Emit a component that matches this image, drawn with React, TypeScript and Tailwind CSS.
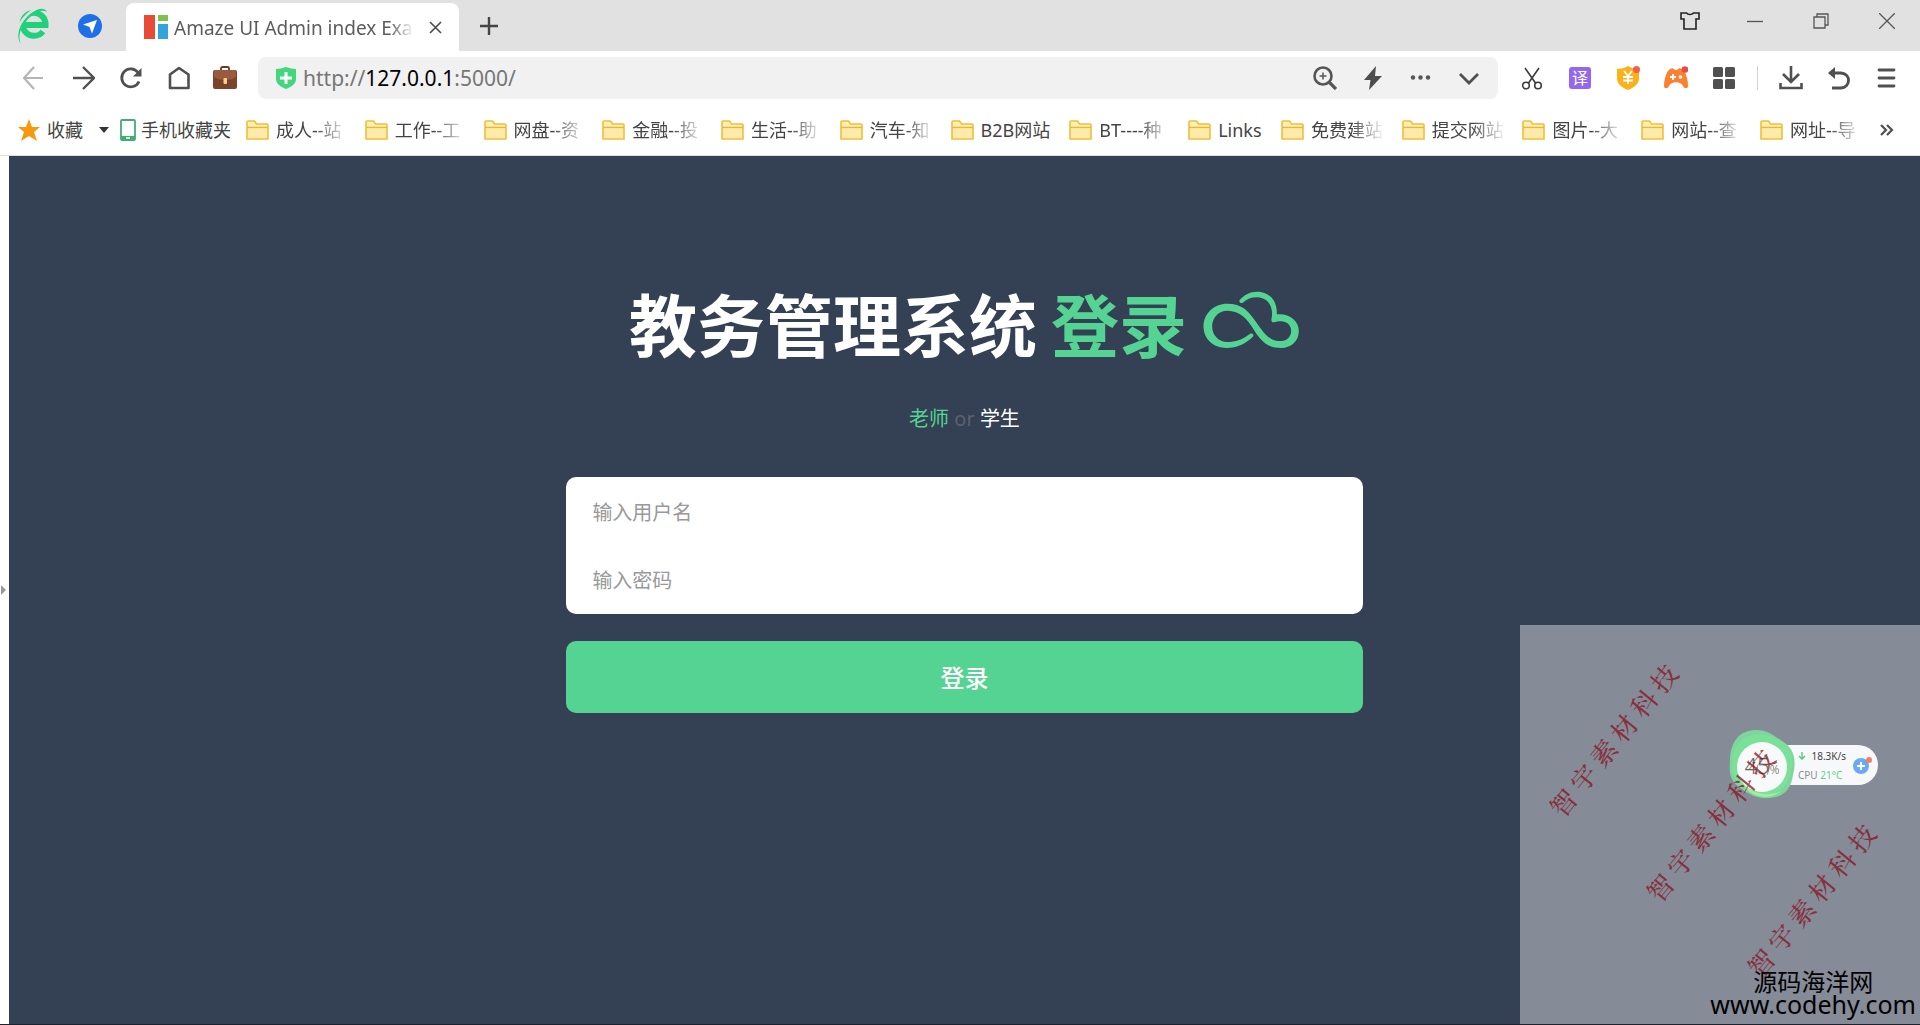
import { useState } from 'react';
import type { FormEvent } from 'react';

interface Bookmark {
    title: string;
    width: string;
}

const BOOKMARKS: Bookmark[] = [
    { title: '成人--站', width: 'w-[72px]' },
    { title: '工作--工', width: 'w-[72px]' },
    { title: '网盘--资', width: 'w-[72px]' },
    { title: '金融--投', width: 'w-[72px]' },
    { title: '生活--助', width: 'w-[72px]' },
    { title: '汽车-知', width: 'w-[64px]' },
    { title: 'B2B网站', width: 'w-[72px]' },
    { title: 'BT----种', width: 'w-[72px]' },
    { title: 'Links', width: 'w-[46px]' },
    { title: '免费建站', width: 'w-[74px]' },
    { title: '提交网站', width: 'w-[74px]' },
    { title: '图片--大', width: 'w-[72px]' },
    { title: '网站--查', width: 'w-[72px]' },
    { title: '网址--导', width: 'w-[72px]' },
];

const NO_FADE = ['B2B网站', 'Links'];

const WATERMARKS = [
    'left-[93px] top-[115px]',
    'left-[190px] top-[200px]',
    'left-[291px] top-[275px]',
];

function BrowserLogo() {
    return (
        <svg viewBox="0 0 34 38" className="h-[38px] w-[34px]" aria-hidden="true">
            <path d="M27 24.500A11.500 11.500 0 1 1 29.500 18H9" fill="none" stroke="#1fd17b" strokeWidth="6" />
            <path d="M3 37C-1 30 2 18 11 9 19 1 27-1 31 3" fill="none" stroke="#e1e1e1" strokeWidth="4" />
            <path d="M5 37C0 31 2 19 11 10 19 2 28-1 31 5 26 2 20 5 13 11 5 19 1 29 5 37Z" fill="#1fd17b" />
        </svg>
    );
}

function FolderIcon() {
    return (
        <svg viewBox="0 0 23 20" className="h-5 w-[23px] shrink-0" aria-hidden="true">
            <path d="M1 19V2a1 1 0 0 1 1-1h6.500l2 3H21a1 1 0 0 1 1 1v14z" fill="#fff0b8" stroke="#efbe3a" strokeWidth="1.600" />
            <path d="M1 7.500h21" stroke="#efb52c" strokeWidth="1.500" />
            <path d="M2 8.500h19V18H2z" fill="#feeaa9" />
        </svg>
    );
}

function TitleBar() {
    return (
        <header className="flex h-[51px] bg-[#e1e1e1]">
            <div className="flex w-[126px] shrink-0 items-center gap-7 pl-4">
                <BrowserLogo />
                <svg viewBox="0 0 24 24" className="size-6" aria-hidden="true">
                    <circle cx="12" cy="12" r="12" fill="#1f70e8" />
                    <path d="M19 6 14 19.500l-2.500-6.500L5 10.500z" fill="#fff" />
                </svg>
            </div>
            <div className="mt-[3px] flex w-[333px] shrink-0 items-center rounded-t-lg bg-white pl-[18px] pr-[17px]">
                <svg viewBox="0 0 24 24" className="size-6 shrink-0" aria-hidden="true">
                    <path d="M0 0h11v24H0z" fill="#e74a35" />
                    <path d="M14 0h10v6H14z" fill="#7fc14b" />
                    <path d="M14 9h10v15H14z" fill="#33a3dc" />
                </svg>
                <span className="ml-[6px] w-[240px] overflow-hidden whitespace-nowrap pt-[2px] text-[19px] text-[#5c5c5c] [mask-image:linear-gradient(to_right,#000_90%,transparent)]">
                    Amaze UI Admin index Exam
                </span>
                <button type="button" aria-label="Close tab" className="ml-auto">
                    <svg viewBox="0 0 13 13" className="size-[13px]" fill="none" stroke="#4a4a4a" strokeWidth="1.600">
                        <path d="m1 1 11 11M12 1 1 12" />
                    </svg>
                </button>
            </div>
            <button type="button" aria-label="New tab" className="ml-[21px]">
                <svg viewBox="0 0 18 18" className="size-[18px]" stroke="#444" strokeWidth="2.400">
                    <path d="M9 0v18M0 9h18" />
                </svg>
            </button>
            <div className="ml-auto flex h-[42px] items-center gap-[50px] pr-[25px]">
                <button type="button" aria-label="Themes" className="-mr-[3px]">
                    <svg viewBox="0 0 20 18" className="h-[18px] w-5" fill="none" stroke="#222" strokeWidth="1.600">
                        <path d="M1 1h5.500c1.500 2 5.500 2 7 0H19v6h-3v10H4V7H1z" />
                    </svg>
                </button>
                <button type="button" aria-label="Minimize">
                    <svg viewBox="0 0 16 16" className="size-4" stroke="#555" strokeWidth="1.300">
                        <path d="M0 8.500h16" />
                    </svg>
                </button>
                <button type="button" aria-label="Restore">
                    <svg viewBox="0 0 16 16" className="size-4" fill="none" stroke="#555" strokeWidth="1.300">
                        <path d="M1 4h11v11H1zM4 4V1h11v11h-3" />
                    </svg>
                </button>
                <button type="button" aria-label="Close">
                    <svg viewBox="0 0 16 16" className="size-4" stroke="#555" strokeWidth="1.300">
                        <path d="m0 0 16 16M16 0 0 16" />
                    </svg>
                </button>
            </div>
        </header>
    );
}

function Toolbar() {
    return (
        <div className="flex items-center pr-[21px] pt-[6px]">
            <div className="flex w-[258px] shrink-0 items-center gap-6 pl-[23px]">
                <button type="button" aria-label="Back">
                    <svg viewBox="0 0 24 24" className="size-6" fill="none" stroke="#b5b5b5" strokeWidth="2.200">
                        <path d="M20 12H1M11 1 1 12l10 11" />
                    </svg>
                </button>
                <button type="button" aria-label="Forward">
                    <svg viewBox="0 0 24 24" className="size-6" fill="none" stroke="#505050" strokeWidth="2.400">
                        <path d="M2 12h20M12 1l11 11-11 11" />
                    </svg>
                </button>
                <button type="button" aria-label="Reload">
                    <svg viewBox="0 0 24 24" className="size-6" fill="none" stroke="#505050" strokeWidth="2.800">
                        <path d="M20 15.500A9 9 0 1 1 19 6.500" />
                        <path d="M22.500 2v8.500H14z" fill="#505050" stroke="none" />
                    </svg>
                </button>
                <button type="button" aria-label="Home">
                    <svg viewBox="0 0 24 24" className="size-6" fill="none" stroke="#505050" strokeWidth="2.600" strokeLinejoin="round">
                        <path d="M3 22V8.500L12 2l9.500 6.500V22z" />
                    </svg>
                </button>
                <button type="button" aria-label="Toolbox" className="-ml-[2px]">
                    <svg viewBox="0 0 24 24" className="size-6" aria-hidden="true">
                        <path d="M8 5V2.500A1.500 1.500 0 0 1 9.500 1h5A1.500 1.500 0 0 1 16 2.500V5" fill="none" stroke="#6b3a25" strokeWidth="1.800" />
                        <rect x="0" y="4" width="24" height="19" rx="2" fill="#7b432c" />
                        <path d="M1 4h22v7c-5 4-17 4-22 0z" fill="#9a5a3f" />
                        <rect x="10.500" y="12" width="3.500" height="6" rx="1" fill="#f3d48a" />
                    </svg>
                </button>
            </div>
            <div className="flex h-[42px] flex-1 items-center rounded-lg bg-[#f1f1f1] px-[17px]">
                <svg viewBox="0 0 22 22" className="size-[22px] shrink-0" aria-hidden="true">
                    <path d="M1 2Q6 2 11 0q5 2 10 2v10c0 5-5 8-10 10C6 20 1 17 1 12z" fill="#42d67d" />
                    <path d="M11 5v12M5 11h12" stroke="#fff" strokeWidth="3" />
                </svg>
                <div className="ml-[6px] flex-1 pt-[2px] text-[21px] text-[#767676]">
                    http://<span className="text-black">127.0.0.1</span>:5000/
                </div>
                <div className="flex items-center gap-6">
                    <button type="button" aria-label="Zoom">
                        <svg viewBox="0 0 24 24" className="size-6" fill="none" stroke="#555">
                            <circle cx="10" cy="10" r="8.500" strokeWidth="2.600" />
                            <path d="m16 16 7 7" strokeWidth="3.200" />
                            <path d="M10 6.500v7M6.500 10h7" strokeWidth="1.500" />
                        </svg>
                    </button>
                    <button type="button" aria-label="Turbo mode">
                        <svg viewBox="0 0 24 24" className="size-6" fill="#4d4d4d">
                            <path d="M15 0 3 14h6.500L8 24 21 10h-7z" />
                        </svg>
                    </button>
                    <button type="button" aria-label="More">
                        <svg viewBox="0 0 24 24" className="size-6" fill="#555">
                            <circle cx="4" cy="11.500" r="2.200" />
                            <circle cx="11.500" cy="11.500" r="2.200" />
                            <circle cx="19" cy="11.500" r="2.200" />
                        </svg>
                    </button>
                    <button type="button" aria-label="History">
                        <svg viewBox="0 0 24 24" className="size-6" fill="none" stroke="#505050" strokeWidth="2.800">
                            <path d="m3 8 9 9 9-9" />
                        </svg>
                    </button>
                </div>
            </div>
            <div className="flex items-center gap-6 pl-[22px]">
                <button type="button" aria-label="Screenshot">
                    <svg viewBox="0 0 24 24" className="size-6" fill="none" stroke="#3c3c3c" strokeWidth="1.600">
                        <path d="m5 2 10.500 15M19 2 8.500 17" />
                        <circle cx="6" cy="19.500" r="3.300" />
                        <circle cx="18" cy="19.500" r="3.300" />
                    </svg>
                </button>
                <button type="button" aria-label="Translate" className="flex size-6 items-center justify-center">
                    <span className="flex size-[22px] items-center justify-center rounded-[3px] bg-[#9467f0] text-base leading-none text-white">译</span>
                </button>
                <button type="button" aria-label="Shopping">
                    <svg viewBox="0 0 24 24" className="size-6">
                        <path d="M12 0c3 2 7 3 11 3v10c0 5-6 9-11 11C7 22 1 18 1 13V3c4 0 8-1 11-3z" fill="#fbb117" />
                        <path d="m8 5 4 5 4-5M7 11h10M7 14.500h10M12 10v8" fill="none" stroke="#fff" strokeWidth="1.800" />
                        <circle cx="20.500" cy="3.500" r="3.500" fill="#f65c50" />
                    </svg>
                </button>
                <button type="button" aria-label="Games">
                    <svg viewBox="0 0 24 24" className="size-6">
                        <path d="M6 3c4-2 3 1 6 1s2-3 6-1c4 3 6 11 6 17 0 3-4 3-5 0-2-5-12-5-14 0-1 3-5 3-5 0C0 14 2 6 6 3z" fill="#fb8130" />
                        <path d="M9 8v6M6 11h6" stroke="#fff" strokeWidth="1.800" />
                        <circle cx="16.500" cy="11" r="1.800" fill="#fff" />
                        <circle cx="21" cy="3.500" r="3.300" fill="#f04848" />
                    </svg>
                </button>
                <button type="button" aria-label="Extensions">
                    <svg viewBox="0 0 24 24" className="size-6" fill="#505050">
                        <rect x="1" y="1" width="10" height="10" rx="1.500" />
                        <rect x="13" y="1" width="10" height="10" rx="1.500" />
                        <rect x="1" y="13" width="10" height="10" rx="1.500" />
                        <rect x="13" y="13" width="10" height="10" rx="1.500" />
                    </svg>
                </button>
                <div className="-mx-[3px] h-6 w-px bg-[#d4d4d4]" />
                <button type="button" aria-label="Downloads">
                    <svg viewBox="0 0 24 24" className="size-6" fill="none" stroke="#505050" strokeWidth="2.600">
                        <path d="M12 0v16M4 8l8 8 8-8M1.500 17v5h21v-5" />
                    </svg>
                </button>
                <button type="button" aria-label="Undo">
                    <svg viewBox="0 0 24 24" className="size-6" fill="none" stroke="#505050" strokeWidth="2.800">
                        <path d="M5 7h9c11 1 9 15 0 15H5" />
                        <path d="M8 1v12L1 7z" fill="#505050" stroke="none" />
                    </svg>
                </button>
                <button type="button" aria-label="Menu">
                    <svg viewBox="0 0 24 24" className="size-6" fill="none" stroke="#505050" strokeWidth="2.800" strokeLinecap="round">
                        <path d="M4 4h15M4 12h15M4 20h15" />
                    </svg>
                </button>
            </div>
        </div>
    );
}

function BookmarksBar() {
    return (
        <nav className="flex h-[51px] items-center border-b border-[#dedede] pl-[17px] pr-[26px] text-[18px] text-[#444]">
            <button type="button" className="flex items-center">
                <svg viewBox="0 0 24 24" className="size-6" fill="#f9970f" aria-hidden="true">
                    <path d="m12 1 3 8h8l-6 5 3 9-8-5-8 5 3-9-6-5h8z" />
                </svg>
                <span className="ml-[6px]">收藏</span>
                <svg viewBox="0 0 10 6" className="ml-4 h-[6px] w-[10px]" fill="#333" aria-hidden="true">
                    <path d="M0 0h10L5 6z" />
                </svg>
            </button>
            <a href="#mobile" className="ml-[11px] flex items-center">
                <svg viewBox="0 0 16 22" className="h-[22px] w-4" aria-hidden="true">
                    <rect x="1" y="1" width="14" height="20" rx="1" fill="#fff" stroke="#3fae75" strokeWidth="1.800" />
                    <path d="M1 17h14v4H1z" fill="#3fae75" />
                    <path d="M6 19h4" stroke="#fff" strokeWidth="1.500" />
                </svg>
                <span className="ml-[5px]">手机收藏夹</span>
            </a>
            <div className="ml-[15px] flex flex-1 justify-between pr-[18px]">
                {BOOKMARKS.map(({ title, width }) => (
                    <a key={title} href="#folder" className="flex items-center gap-[7px]">
                        <FolderIcon />
                        <span
                            className={`${width} whitespace-nowrap ${NO_FADE.includes(title)
                                ? ''
                                : '[mask-image:linear-gradient(to_right,#000_55%,transparent)]'
                                }`}
                        >
                            {title}
                        </span>
                    </a>
                ))}
            </div>
            <button type="button" aria-label="More bookmarks">
                <svg viewBox="0 0 14 12" className="h-3 w-[14px]" fill="none" stroke="#505050" strokeWidth="2.200">
                    <path d="m1 1 5 5-5 5M7 1l5 5-5 5" />
                </svg>
            </button>
        </nav>
    );
}

function LoginForm() {
    const [username, setUsername] = useState('');
    const [password, setPassword] = useState('');

    const handleSubmit = (e: FormEvent) => {
        e.preventDefault();
    };

    return (
        <section className="flex flex-col items-center pt-[125px]">
            <h1 className="flex items-center text-[68px] font-bold leading-[90px] text-white">
                教务管理系统
                <span className="ml-[14px] text-[#55d393]">登录</span>
                <svg viewBox="28 34 290 174" className="-mt-3 ml-4 h-[58px] w-[97px]" fill="#55d393" aria-hidden="true">
                    <path d="M178 164C182 170 172 176 165 182 145 198 122 205 98 205 58 205 29 178 29 140 29 102 60 72 100 72 145 72 165 95 185 125 215 168 228 184 262 184 280 184 292 170 292 154 292 136 278 125 262 125 252 125 248 126 244 127 236 130 231 125 233 118 240 85 225 53 188 53 172 53 160 58 147 69 140 73 134 66 138 60 152 45 168 36 190 36 228 36 251 65 249 104 285 100 315 122 315 154 315 186 290 205 262 205 225 205 205 190 180 150 160 118 140 93 100 93 75 93 55 113 55 140 55 168 75 187 100 187 125 187 145 180 163 166 168 162 174 159 178 164Z" />
                </svg>
            </h1>
            <p className="mt-[33px] text-[20px] leading-[30px] text-[#5b6270]">
                <a href="#teacher" className="text-[#55d393]">老师</a> or <a href="#student" className="text-white">学生</a>
            </p>
            <form onSubmit={handleSubmit} className="mt-[43px] w-5/12">
                <div className="overflow-hidden rounded-[10px] bg-white">
                    <input
                        type="text"
                        aria-label="用户名"
                        placeholder="输入用户名"
                        value={username}
                        onChange={(e) => setUsername(e.target.value)}
                        className="block h-[69px] w-full px-[26px] pt-[2px] text-[20px] text-gray-700 outline-none placeholder:text-[#999]"
                    />
                    <input
                        type="password"
                        aria-label="密码"
                        placeholder="输入密码"
                        value={password}
                        onChange={(e) => setPassword(e.target.value)}
                        className="block h-[68px] w-full px-[26px] text-[20px] text-gray-700 outline-none placeholder:text-[#999]"
                    />
                </div>
                <button type="submit" className="mt-[27px] h-[72px] w-full rounded-[10px] bg-[#55d393] pt-[2px] text-[24px] font-medium text-white">
                    登录
                </button>
            </form>
        </section>
    );
}

function SpeedWidget() {
    return (
        <div className="absolute left-[209px] top-[105px] flex items-center">
            <div className="relative z-10 flex h-[70px] w-[66px] items-center justify-center">
                <svg viewBox="0 0 66 70" className="absolute inset-0 h-[70px] w-[66px]" aria-hidden="true">
                    <path d="M27 0c12 0 18 6 26 11 14 8 14 22 11 34-2 14-9 22-23 23-14 1-22-4-32-12C1 50 0 42 1 31 1 14 9 0 27 0z" fill="#7dd79c" />
                    <path d="M24 5c14-2 23 3 31 8 10 8 10 22 6 33-5 14-15 21-28 18C16 60 3 52 3 36 3 20 10 8 24 5z" fill="#7be09a" />
                    <path d="M14 55c10 8 26 13 38 6-8 8-28 9-38-6z" fill="#a5ed9f" />
                    <circle cx="33" cy="37" r="25" fill="#f8f9f9" />
                </svg>
                <span className="relative text-[22px] font-light text-[#666]">
                    45<span className="text-[12px]">%</span>
                </span>
            </div>
            <div className="-ml-[20px] flex h-10 items-center rounded-r-full bg-[#f7f8f9] pl-[23px] pr-[6px]">
                <div className="flex w-12 flex-col gap-[3px] text-[10px] leading-4">
                    <div className="flex items-center justify-between text-[#444]">
                        <svg viewBox="0 0 8 8" className="size-2" fill="none" stroke="#4fc77a" strokeWidth="1.300" aria-hidden="true">
                            <path d="M4 0v7M1 4l3 3 3-3" />
                        </svg>
                        18.3K/s
                    </div>
                    <div className="whitespace-nowrap text-[#8b8f96]">
                        CPU <span className="text-[#5fd08a]">21°C</span>
                    </div>
                </div>
                <svg viewBox="0 0 20 20" className="ml-[6px] size-5" aria-hidden="true">
                    <circle cx="9" cy="11" r="8" fill="#6aa9f7" />
                    <path d="M9 7v8M5 11h8" stroke="#fff" strokeWidth="2" />
                    <circle cx="17" cy="5" r="3" fill="#fb7b62" />
                </svg>
            </div>
        </div>
    );
}

function WatermarkPanel() {
    return (
        <aside className="absolute bottom-0 right-0 h-[399px] w-[400px] overflow-hidden bg-[#868b98]">
            <SpeedWidget />
            {WATERMARKS.map((place) => (
                <div
                    key={place}
                    className={`absolute ${place} z-20 flex -translate-x-1/2 -translate-y-1/2 -rotate-[51deg] gap-[6px] font-['Noto_Serif_CJK_SC','Noto_Sans_CJK_SC',serif] text-[26px] font-medium leading-none text-[#851825]/80`}
                >
                    {'智宇素材科技'.split('').map((char) => (
                        <span key={char}>{char}</span>
                    ))}
                </div>
            ))}
            <div className="absolute bottom-[9px] right-[4px] z-30 text-center leading-[22px] text-black">
                <p className="text-[24px]">源码海洋网</p>
                <p className="text-[25px]">www.codehy.com</p>
            </div>
        </aside>
    );
}

export default function App() {
    return (
        <div className="flex min-h-screen flex-col bg-white font-['Noto_Sans','Noto_Sans_CJK_SC',sans-serif]">
            <TitleBar />
            <Toolbar />
            <div className="pt-[6px]">
                <BookmarksBar />
            </div>
            <div className="flex flex-1 border-b border-[#1d222b]">
                <div className="flex w-[9px] shrink-0 items-center">
                    <svg viewBox="0 0 6 10" className="h-[10px] w-[6px]" fill="#999" aria-hidden="true">
                        <path d="M1 0l5 5-5 5z" />
                    </svg>
                </div>
                <main className="relative flex-1 bg-[#344054]">
                    <LoginForm />
                    <WatermarkPanel />
                </main>
            </div>
        </div>
    );
}
